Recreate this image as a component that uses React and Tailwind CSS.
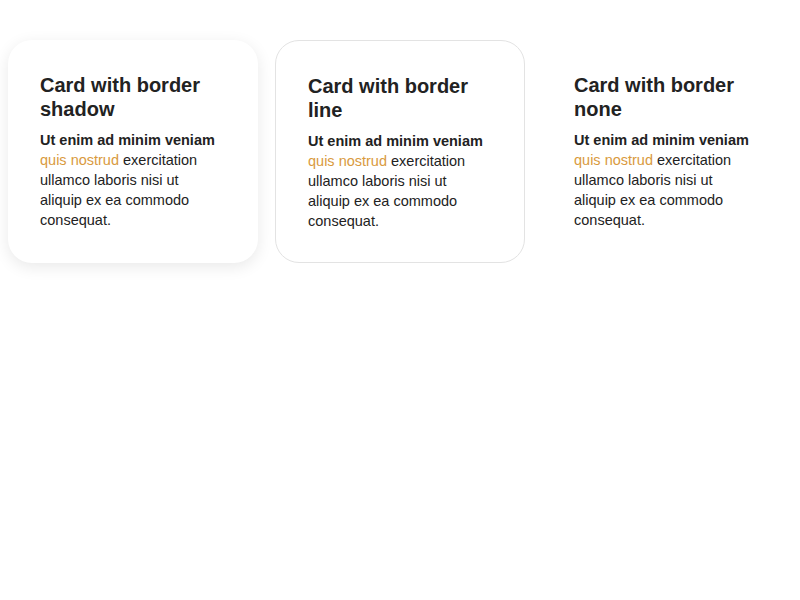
import React from 'react';

const cards = [
  { title: 'Card with border shadow', style: 'shadow-[0_4px_16px_rgba(0,0,0,0.09)]' },
  { title: 'Card with border line', style: 'border border-[#e3e3e3]' },
  { title: 'Card with border none', style: '' },
];

export default function App() {
  return (
    <div className="min-h-screen bg-white font-['Liberation_Sans',Arial,sans-serif] text-[#222]">
      <div className="flex gap-[17px] pl-2 pt-10">
        {cards.map((card) => (
          <div key={card.title} className={`w-[250px] rounded-3xl bg-white px-8 pt-[33px] pb-[31px] ${card.style}`}>
            <h3 className="text-[20px] font-semibold leading-6">{card.title}</h3>
            <p className="mt-[9px] max-w-[180px] text-[14.5px] leading-5">
              <span className="font-semibold">Ut enim ad minim veniam</span>{' '}
              <span className="text-[#d99a3e]">quis nostrud</span> exercitation ullamco laboris nisi ut
              aliquip ex ea commodo consequat.
            </p>
          </div>
        ))}
      </div>
    </div>
  );
}
